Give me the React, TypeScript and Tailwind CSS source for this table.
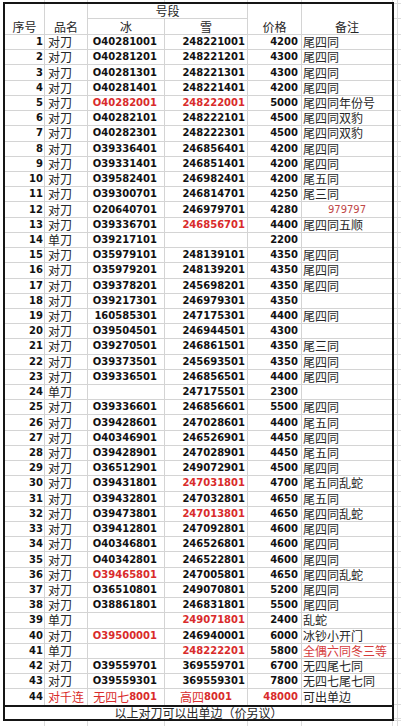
import React from "react";

type R = [string, string, string, string, string, string];

const data: R[] = [
  ["对刀", "O40281001", "248221001", "4200", "尾四同", ""],
  ["对刀", "O40281201", "248221201", "4300", "尾四同", ""],
  ["对刀", "O40281301", "248221301", "4300", "尾四同", ""],
  ["对刀", "O40281401", "248221401", "4200", "尾四同", ""],
  ["对刀", "O40282001", "248222001", "5000", "尾四同年份号", "is"],
  ["对刀", "O40282101", "248222101", "4500", "尾四同双豹", ""],
  ["对刀", "O40282301", "248222301", "4500", "尾四同双豹", ""],
  ["对刀", "O39336401", "246856401", "4200", "尾四同", ""],
  ["对刀", "O39331401", "246851401", "4200", "尾四同", ""],
  ["对刀", "O39582401", "246982401", "4200", "尾五同", ""],
  ["对刀", "O39300701", "246814701", "4250", "尾三同", ""],
  ["对刀", "O20640701", "246979701", "4280", "979797", "c"],
  ["对刀", "O39336701", "246856701", "4400", "尾四同五顺", "s"],
  ["单刀", "O39217101", "", "2200", "", ""],
  ["对刀", "O35979101", "248139101", "4350", "尾四同", ""],
  ["对刀", "O35979201", "248139201", "4350", "尾四同", ""],
  ["对刀", "O39378201", "245698201", "4350", "尾四同", ""],
  ["对刀", "O39217301", "246979301", "4350", "", ""],
  ["对刀", "160585301", "247175301", "4400", "尾四同", ""],
  ["对刀", "O39504501", "246944501", "4300", "", ""],
  ["对刀", "O39270501", "246861501", "4350", "尾三同", ""],
  ["对刀", "O39373501", "245693501", "4350", "尾四同", ""],
  ["对刀", "O39336501", "246856501", "4400", "尾四同", ""],
  ["单刀", "", "247175501", "2300", "", ""],
  ["对刀", "O39336601", "246856601", "5500", "尾四同", ""],
  ["对刀", "O39428601", "247028601", "4400", "尾五同", ""],
  ["对刀", "O40346901", "246526901", "4450", "尾四同", ""],
  ["对刀", "O39428901", "247028901", "4450", "尾五同", ""],
  ["对刀", "O36512901", "249072901", "4500", "尾四同", ""],
  ["对刀", "O39431801", "247031801", "4700", "尾五同乱蛇", "s"],
  ["对刀", "O39432801", "247032801", "4650", "尾五同", ""],
  ["对刀", "O39473801", "247013801", "4650", "尾四同乱蛇", "s"],
  ["对刀", "O39412801", "247092801", "4600", "尾四同", ""],
  ["对刀", "O40346801", "246526801", "4600", "尾四同", ""],
  ["对刀", "O40342801", "246522801", "4600", "尾四同", ""],
  ["对刀", "O39465801", "247005801", "4650", "尾四同乱蛇", "i"],
  ["对刀", "O36510801", "249070801", "5200", "尾四同", ""],
  ["对刀", "O38861801", "246831801", "5500", "尾四同", ""],
  ["单刀", "", "249071801", "2400", "乱蛇", "s"],
  ["对刀", "O39500001", "246940001", "6000", "冰钞小开门", "i"],
  ["单刀", "", "248222201", "5800", "全偶六同冬三等", "sn"],
  ["对刀", "O39559701", "369559701", "6700", "无四尾七同", ""],
  ["对刀", "O39559301", "369559301", "7800", "无四七尾七同", ""],
];

const num = "font-['DejaVu_Sans',sans-serif] font-bold text-[10px] leading-[14px]";
const cjk = "font-['Noto_Sans_CJK_SC',sans-serif] text-[12px] leading-[14px]";
const cell = "flex items-center border-r border-b border-[#d4d4d4] whitespace-nowrap";
const lastCell = "flex items-center border-b border-[#d4d4d4] whitespace-nowrap";
const red = "text-[#d92b2b]";
const ink = "text-[#111]";
const cjkInk = "text-[#262626]";

function Strip() {
  return (
    <div className="flex h-full">
      <div className="w-[45px] border-r border-[#dcdcdc]" />
      <div className="w-[43px] border-r border-[#dcdcdc]" />
      <div className="w-[77px] border-r border-[#dcdcdc]" />
      <div className="w-[83px] border-r border-[#dcdcdc]" />
      <div className="w-[54px] border-r border-[#dcdcdc]" />
      <div className="w-[91px] border-r border-[#dcdcdc]" />
      <div className="w-[5px] border-r border-[#dcdcdc]" />
    </div>
  );
}

export default function App() {
  const heights: string[] = ["h-[2px]", "h-[15px]", "h-[16px]"];
  for (let i = 0; i < 44; i++) heights.push("h-[15.23px]");
  heights.push("h-[14px]");
  heights.push("h-[2px]");

  return (
    <div className="w-[401px] h-[726px] bg-white overflow-hidden flex flex-col">
      <div className="h-[2px] shrink-0">
        <Strip />
      </div>
      <div className="flex shrink-0">
        <div className="w-[3px] shrink-0" />
        <div className="w-[391px] shrink-0 border-2 border-[#151515] bg-white">
          <div className="grid grid-cols-[40px_43px_77px_83px_54px_90px] grid-rows-[15px_16px_repeat(44,15.23px)_14px]">
            {/* header */}
            <div className={`${cell} row-span-2 items-end justify-center`}>
              <span className={`${cjk} ${cjkInk} leading-[15px]`}>序号</span>
            </div>
            <div className={`${cell} row-span-2 items-end justify-center`}>
              <span className={`${cjk} ${cjkInk} leading-[15px]`}>品名</span>
            </div>
            <div className={`${cell} col-span-2 items-end justify-center`}>
              <span className={`${cjk} ${cjkInk} leading-[13px]`}>号段</span>
            </div>
            <div className={`${cell} row-span-2 items-end justify-center`}>
              <span className={`${cjk} ${cjkInk} leading-[15px]`}>价格</span>
            </div>
            <div className={`${lastCell} row-span-2 items-end justify-center`}>
              <span className={`${cjk} ${cjkInk} leading-[15px]`}>备注</span>
            </div>
            <div className={`${cell} items-end justify-center`}>
              <span className={`${cjk} ${cjkInk} leading-[15px]`}>冰</span>
            </div>
            <div className={`${cell} items-end justify-center`}>
              <span className={`${cjk} ${cjkInk} leading-[15px]`}>雪</span>
            </div>

            {data.map((r, i) => {
              const [name, ice, snow, price, note, f] = r;
              return (
                <React.Fragment key={i}>
                  <div className={`${cell} justify-end pr-[1px]`}>
                    <span className={`${num} ${ink}`}>{i + 1}</span>
                  </div>
                  <div className={`${cell} pl-[3px]`}>
                    <span className={`${cjk} ${cjkInk}`}>{name}</span>
                  </div>
                  <div className={`${cell} justify-end pr-[7px]`}>
                    <span className={`${num} ${f.includes("i") ? red : ink}`}>{ice}</span>
                  </div>
                  <div className={`${cell} justify-end pr-[2px]`}>
                    <span className={`${num} ${f.includes("s") ? red : ink}`}>{snow}</span>
                  </div>
                  <div className={`${cell} justify-end pr-[3px]`}>
                    <span className={`${num} ${ink}`}>{price}</span>
                  </div>
                  {f.includes("c") ? (
                    <div className={`${lastCell} justify-center`}>
                      <span className="font-['DejaVu_Sans',sans-serif] text-[10px] leading-[14px] text-[#c04848]">
                        {note}
                      </span>
                    </div>
                  ) : (
                    <div className={`${lastCell} pl-[1px]`}>
                      <span className={`${cjk} ${f.includes("n") ? "text-[#d63c3c]" : cjkInk}`}>{note}</span>
                    </div>
                  )}
                </React.Fragment>
              );
            })}

            {/* row 44 */}
            <div className="flex items-center justify-end pr-[1px] border-r border-[#d4d4d4]">
              <span className={`${num} ${ink}`}>44</span>
            </div>
            <div className="flex items-center pl-[3px] border-r border-[#d4d4d4] whitespace-nowrap">
              <span className={`${cjk} ${red}`}>对千连</span>
            </div>
            <div className="flex items-center justify-end pr-[7px] border-r border-[#d4d4d4] whitespace-nowrap">
              <span className={`${cjk} ${red}`}>无四七</span>
              <span className={`${num} ${red}`}>8001</span>
            </div>
            <div className="flex items-center pl-[15px] border-r border-[#d4d4d4] whitespace-nowrap">
              <span className={`${cjk} ${red}`}>高四</span>
              <span className={`${num} ${red}`}>8001</span>
            </div>
            <div className="flex items-center justify-end pr-[3px] border-r border-[#d4d4d4]">
              <span className={`${num} ${red}`}>48000</span>
            </div>
            <div className="flex items-center pl-[1px] whitespace-nowrap">
              <span className={`${cjk} ${cjkInk}`}>可出单边</span>
            </div>

            {/* footer */}
            <div className="col-span-6 flex items-center justify-center border-t-2 border-[#151515]">
              <span className={`${cjk} ${cjkInk} leading-[12px]`}>以上对刀可以出单边（价另议）</span>
            </div>
          </div>
        </div>
        <div className="w-[7px] shrink-0 flex flex-col bg-[linear-gradient(to_right,transparent_3px,#dcdcdc_3px,#dcdcdc_4px,transparent_4px)]">
          {heights.map((h, i) => (
            <div key={i} className={`${h} shrink-0 border-b border-[#dcdcdc]`} />
          ))}
        </div>
      </div>
      <div className="flex-1">
        <Strip />
      </div>
    </div>
  );
}
